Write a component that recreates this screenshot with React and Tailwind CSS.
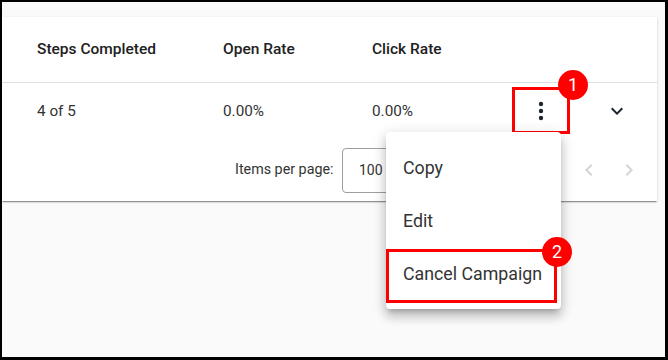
import React from "react";

const font = { fontFamily: "Roboto, 'Noto Sans', sans-serif" };

function Badge({ n, className }) {
  return (
    <div
      className={
        "absolute w-[30px] h-[30px] rounded-full bg-[#ff0000] text-white flex items-center justify-center text-[18px] leading-none " +
        className
      }
    >
      {n}
    </div>
  );
}

export default function App() {
  return (
    <div
      style={font}
      className="relative w-[668px] h-[360px] box-border border-t-2 border-l-2 border-r-[3px] border-b-[3px] border-black bg-[#fafafa] overflow-hidden pt-[15px]"
    >
      {/* Card */}
      <div className="w-[655px] bg-white shadow-[0_2px_1px_-1px_rgba(0,0,0,0.25),0_1px_1px_0_rgba(0,0,0,0.16),0_1px_3px_0_rgba(0,0,0,0.12)]">
        {/* Header */}
        <div className="h-[66px] flex items-center pl-[35px] border-b border-[#e0e0e0] text-[15.5px] font-medium text-[#212121]">
          <div className="w-[186px]">Steps Completed</div>
          <div className="w-[149px]">Open Rate</div>
          <div className="w-[140px]">Click Rate</div>
        </div>
        {/* Data row */}
        <div className="h-[56px] flex items-center pl-[35px] text-[15.3px] text-[#333333]">
          <div className="w-[186px]">4 of 5</div>
          <div className="w-[149px]">0.00%</div>
          <div className="w-[140px]">0.00%</div>
          <div className="w-[58px] h-[46px] flex items-center justify-center">
            <svg width="8" height="22" viewBox="0 0 8 22">
              <circle cx="4" cy="4" r="2.2" fill="#1e2430" />
              <circle cx="4" cy="11" r="2.2" fill="#1e2430" />
              <circle cx="4" cy="18" r="2.2" fill="#1e2430" />
            </svg>
          </div>
          <div className="ml-[23px] w-[48px] h-[40px] flex items-center justify-center">
            <svg width="24" height="24" viewBox="0 0 24 24">
              <path
                d="M16.59 8.59L12 13.17 7.41 8.59 6 10l6 6 6-6z"
                fill="#1e2430"
              />
            </svg>
          </div>
        </div>
        {/* Pagination */}
        <div className="h-[62px] flex items-center pl-[233px] text-[14.3px] text-[#333333]">
          <div className="w-[107px]">Items per page:</div>
          <div className="w-[86px] h-[45px] box-border border border-[#9e9e9e] rounded-[4px] flex items-center pl-[16px] text-[14px]">
            100
          </div>
          <div className="w-[141px] pl-[24px]">1 – 1 of 1</div>
          <div className="w-[40px] h-[40px] flex items-center justify-center">
            <svg width="24" height="24" viewBox="0 0 24 24">
              <path
                d="M15.41 7.41L14 6l-6 6 6 6 1.41-1.41L10.83 12z"
                fill="#d4d4d4"
              />
            </svg>
          </div>
          <div className="w-[40px] h-[40px] flex items-center justify-center">
            <svg width="24" height="24" viewBox="0 0 24 24">
              <path
                d="M10 6L8.59 7.41 13.17 12l-4.58 4.59L10 18l6-6z"
                fill="#d4d4d4"
              />
            </svg>
          </div>
        </div>
      </div>

      {/* Annotation 1 */}
      <div className="absolute left-[510px] top-[85px] w-[58px] h-[47px] border-[3px] border-[#ff0000]" />
      <Badge n="1" className="left-[556px] top-[68px]" />

      {/* Menu */}
      <div className="absolute left-[384px] top-[130px] w-[175px] pt-[10px] pb-[8px] bg-white rounded-[4px] shadow-[0_5px_5px_-3px_rgba(0,0,0,0.2),0_8px_10px_1px_rgba(0,0,0,0.14),0_3px_14px_2px_rgba(0,0,0,0.12)] text-[17.8px] text-[#333333]">
        <div className="h-[53px] flex items-center pl-[17px]">Copy</div>
        <div className="h-[53px] flex items-center pl-[17px]">Edit</div>
        <div className="h-[53px] flex items-center pl-[17px] whitespace-nowrap">Cancel Campaign</div>
      </div>

      {/* Annotation 2 */}
      <div className="absolute left-[384px] top-[247px] w-[171px] h-[54px] border-[3px] border-[#ff0000]" />
      <Badge n="2" className="left-[540px] top-[235px]" />
    </div>
  );
}
